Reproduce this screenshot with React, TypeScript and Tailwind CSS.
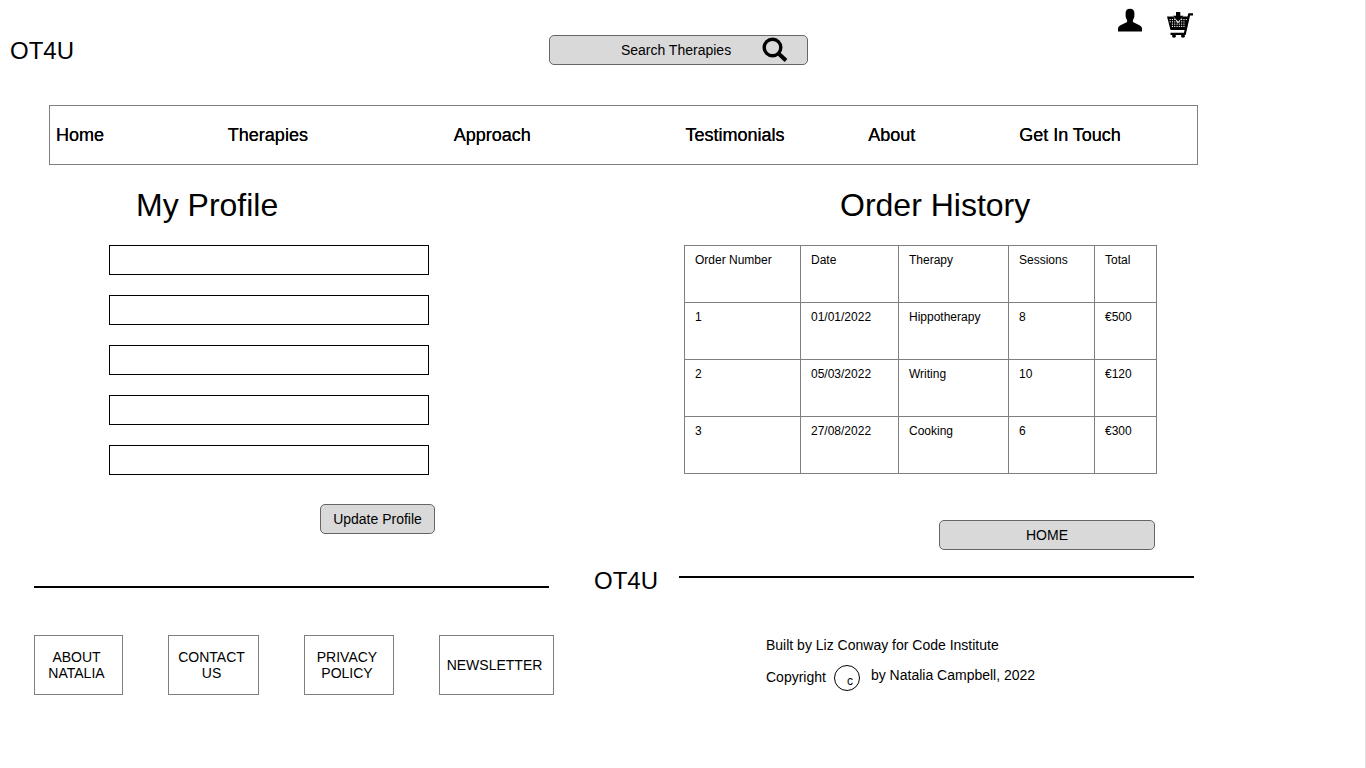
import React from "react";

const navItems = ["Home", "Therapies", "Approach", "Testimonials", "About", "Get In Touch"];

const profileFields = ["First name", "Last name", "Email", "Phone", "Address"];

const columns = ["Order Number", "Date", "Therapy", "Sessions", "Total"];

const orders = [
  ["1", "01/01/2022", "Hippotherapy", "8", "€500"],
  ["2", "05/03/2022", "Writing", "10", "€120"],
  ["3", "27/08/2022", "Cooking", "6", "€300"],
];

function UserIcon() {
  return (
    <svg viewBox="0 0 24 24" className="h-6 w-6" fill="#000" aria-hidden="true">
      <path d="M12 .8c2.700 0 4.400 1.500 4.400 4.200v2.300c0 2-.6 3.600-1.500 4.700v2l6.600 3.300c1.600.8 2.500 1.900 2.500 3.500v2.700H0v-2.700c0-1.600.9-2.700 2.500-3.500L9.100 14v-2c-.9-1.100-1.500-2.700-1.500-4.700V5C7.600 2.300 9.300.8 12 .8z" />
    </svg>
  );
}

function CartIcon() {
  return (
    <svg viewBox="0 0 26 26" className="h-[26px] w-[26px]" aria-hidden="true">
      <path d="M0 4.500h21.500L18 18H3.500z" fill="#000" />
      <g fill="#fff">
        {[7, 9.3, 11.6, 13.9].map((y, row) =>
          [2.6, 4.9, 7.2, 9.5, 11.8, 14.1, 16.4, 18.7]
            .filter((x) => x > 1.6 + row * 0.7 && x < 19.2 - row * 0.9)
            .map((x) => <rect key={`${x}-${y}`} x={x} y={y} width="1.100" height="1.100" />)
        )}
      </g>
      <path d="M5 2.500L11 11.500L17 2.500z" fill="#fff" />
      <path d="M9 0h4.300v3.800h3.200L11.200 9.800L5.800 3.800H9z" fill="#000" />
      <path d="M26 2.300h-3.800L17.800 21.800H3.500" fill="none" stroke="#000" strokeWidth="2.200" />
      <ellipse cx="7" cy="24" rx="2" ry="1.700" />
      <ellipse cx="16" cy="24" rx="2" ry="1.700" />
    </svg>
  );
}

function SearchIcon() {
  return (
    <svg viewBox="0 0 26 26" className="h-[26px] w-[26px]" fill="none" stroke="#000" aria-hidden="true">
      <circle cx="10.500" cy="10.500" r="8.300" strokeWidth="3.400" />
      <path d="M16 16l8 7.500" strokeWidth="4" />
    </svg>
  );
}

function FooterLink({ lines }: { lines: string[] }) {
  return (
    <a
      href="#"
      className="flex h-[60px] flex-col items-center justify-center border border-[#7f7f7f] pr-1 text-center text-sm leading-4"
    >
      {lines.map((line) => (
        <span key={line}>{line}</span>
      ))}
    </a>
  );
}

export default function App() {
  return (
    <div className="min-h-screen border-r border-[#e4e4e4] bg-white font-['Liberation_Sans',Arial,sans-serif] text-black">
      <header className="grid h-[105px] grid-cols-[549fr_259fr_557fr]">
        <a href="#" className="self-start pt-[35px] pl-[10px] text-2xl leading-8">
          OT4U
        </a>
        <form className="mt-[35px] flex h-[30px] items-center rounded-[5px] border border-[#666] bg-[#d9d9d9]">
          <input
            type="text"
            aria-label="Search Therapies"
            placeholder="Search Therapies"
            className="h-full w-full min-w-0 bg-transparent pl-10 text-center text-sm outline-none placeholder:text-black"
          />
          <button type="button" aria-label="Search" className="mr-[19px] shrink-0">
            <SearchIcon />
          </button>
        </form>
        <div className="flex items-start justify-end gap-[25px] pt-2 pr-[172px]">
          <a href="#" aria-label="Profile">
            <UserIcon />
          </a>
          <a href="#" aria-label="Basket" className="pt-1">
            <CartIcon />
          </a>
        </div>
      </header>

      <nav className="mr-[167px] ml-[49px] grid h-[60px] grid-cols-[172fr_226fr_232fr_183fr_151fr_178fr] items-center border border-[#7f7f7f] pl-[6px] text-lg [text-shadow:0_0_0_#000]">
        {navItems.map((item) => (
          <a key={item} href="#">
            {item}
          </a>
        ))}
      </nav>

      <main className="mr-[208px] ml-[109px] grid grid-cols-[575fr_473fr] pt-5">
        <section>
          <h1 className="pl-[27px] text-[32px] leading-10">My Profile</h1>
          <form className="mt-5">
            <div className="flex w-80 flex-col gap-5">
              {profileFields.map((field) => (
                <input key={field} type="text" aria-label={field} className="h-[30px] border border-black bg-white px-2 text-sm" />
              ))}
            </div>
            <div className="mt-[29px] flex w-[326px] justify-end">
              <button type="button" className="h-[30px] w-[115px] rounded-[5px] border border-[#666] bg-[#d9d9d9] text-sm">
                Update Profile
              </button>
            </div>
          </form>
        </section>

        <section>
          <h1 className="pl-[156px] text-[32px] leading-10">Order History</h1>
          <table className="mt-5 w-full table-fixed border-collapse text-xs leading-4">
            <colgroup>
              <col className="w-[116px]" />
              <col className="w-[98px]" />
              <col className="w-[110px]" />
              <col className="w-[86px]" />
              <col />
            </colgroup>
            <thead>
              <tr className="h-[57px]">
                {columns.map((column) => (
                  <th key={column} className="border border-[#7f7f7f] px-[10px] py-[6px] text-left align-top font-normal">
                    {column}
                  </th>
                ))}
              </tr>
            </thead>
            <tbody>
              {orders.map((order) => (
                <tr key={order[0]} className="h-[57px]">
                  {order.map((value, index) => (
                    <td key={columns[index]} className="border border-[#7f7f7f] px-[10px] py-[6px] align-top">
                      {value}
                    </td>
                  ))}
                </tr>
              ))}
            </tbody>
          </table>
          <div className="mt-[46px] flex justify-end pr-[2px]">
            <button type="button" className="h-[30px] w-[216px] rounded-[5px] border border-[#666] bg-[#d9d9d9] text-sm">
              HOME
            </button>
          </div>
        </section>
      </main>

      <footer className="mr-[171px] ml-[34px]">
        <div className="flex items-start pt-[14px]">
          <hr className="mt-[22px] flex-1 border-0 border-t-2 border-black" />
          <span className="pt-px pr-[21px] pl-[45px] text-2xl leading-8">OT4U</span>
          <hr className="mt-3 flex-1 border-0 border-t-2 border-black" />
        </div>
        <div className="mt-[38px] grid grid-cols-[732fr_428fr]">
          <div className="grid grid-cols-[89px_91px_90px_115px] justify-start gap-x-[45px]">
            <FooterLink lines={["ABOUT", "NATALIA"]} />
            <FooterLink lines={["CONTACT", "US"]} />
            <FooterLink lines={["PRIVACY", "POLICY"]} />
            <FooterLink lines={["NEWSLETTER"]} />
          </div>
          <div className="text-sm leading-5">
            <p>Built by Liz Conway for Code Institute</p>
            <p className="mt-[10px] flex items-start">
              <span className="pt-[2px]">Copyright</span>
              <span className="ml-2 flex h-[26px] w-[26px] items-end justify-end rounded-full border border-black pr-[6px] pb-px text-xs leading-4">
                c
              </span>
              <span className="ml-[11px]">by Natalia Campbell, 2022</span>
            </p>
          </div>
        </div>
      </footer>
    </div>
  );
}
